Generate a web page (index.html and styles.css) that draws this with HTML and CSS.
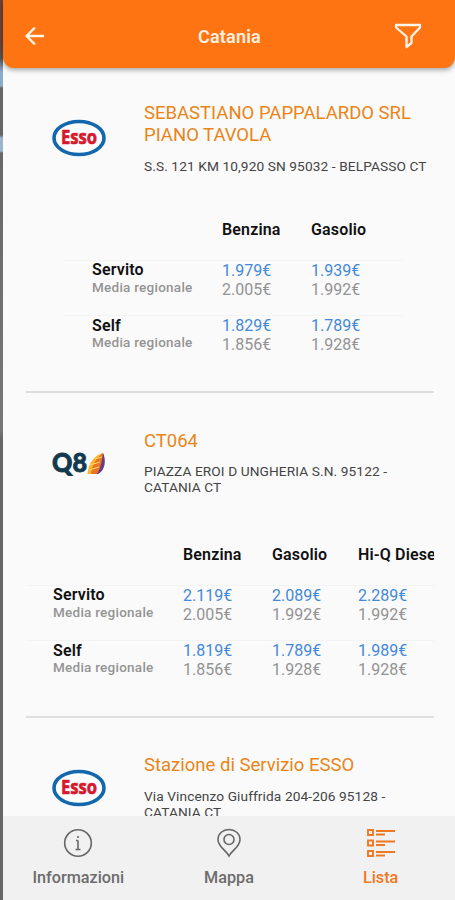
FILE: index.html
```
<!DOCTYPE html>
<html lang="it">
<head>
    <meta charset="UTF-8">
    <meta name="viewport" content="width=device-width, initial-scale=1.0">
    <title>Distributori - Catania</title>
    <link rel="stylesheet" href="styles.css">
</head>
<body>
    <div class="app">
        <header>
            <svg class="back" viewBox="0 0 20 20"><path d="M19 10H2M10 1.500L1.500 10L10 18.500"/></svg>
            <h1>Catania</h1>
            <svg class="filter" viewBox="0 0 28 26"><path d="M2 2H26V4.500L17.500 13.500V20L12.500 24V13.500L2 4.500Z"/></svg>
        </header>
        <main>
            <section class="station">
                <div class="info tall">
                    <svg class="logo" viewBox="0 0 54 38">
                        <ellipse cx="27" cy="19" rx="25" ry="16.500" fill="#fff" stroke="#1267ad" stroke-width="3.600"/>
                        <text class="esso" x="27" y="25" textLength="36" lengthAdjust="spacingAndGlyphs">Esso</text>
                    </svg>
                    <div class="text">
                        <h2>SEBASTIANO PAPPALARDO SRL PIANO TAVOLA</h2>
                        <p>S.S. 121 KM 10,920 SN 95032 - BELPASSO CT</p>
                    </div>
                </div>
                <div class="prices two">
                    <div class="row head"><span></span><b>Benzina</b><b>Gasolio</b></div>
                    <div class="row">
                        <div class="label"><b>Servito</b><small>Media regionale</small></div>
                        <div class="price">1.979€<i>2.005€</i></div>
                        <div class="price">1.939€<i>1.992€</i></div>
                    </div>
                    <div class="row">
                        <div class="label"><b>Self</b><small>Media regionale</small></div>
                        <div class="price">1.829€<i>1.856€</i></div>
                        <div class="price">1.789€<i>1.928€</i></div>
                    </div>
                </div>
            </section>
            <section class="station">
                <div class="info">
                    <svg class="logo" viewBox="0 0 54 38">
                        <text class="q8" x="0" y="27" textLength="35" lengthAdjust="spacingAndGlyphs">Q8</text>
                        <path d="M51 8C43 10 36 18 35.500 29H46C51 24 53 16 51 8Z" fill="#f6b52c"/>
                        <path d="M51 8C44 13 40 20 39 29H46C51 24 53 16 51 8Z" fill="#ea7325"/>
                        <path d="M51 8C50 16 49 22 45 29H46C54 25 54 14 51 8Z" fill="#663c83"/>
                        <path d="M38 20L48 17M37 25L47 22M43 14L50 12" stroke="#ffd65d" stroke-width="1.300"/>
                    </svg>
                    <div class="text">
                        <h2>CT064</h2>
                        <p>PIAZZA EROI D UNGHERIA S.N. 95122 - CATANIA CT</p>
                    </div>
                </div>
                <div class="prices">
                    <div class="row head"><span></span><b>Benzina</b><b>Gasolio</b><b>Hi-Q Diesel</b></div>
                    <div class="row">
                        <div class="label"><b>Servito</b><small>Media regionale</small></div>
                        <div class="price">2.119€<i>2.005€</i></div>
                        <div class="price">2.089€<i>1.992€</i></div>
                        <div class="price">2.289€<i>1.992€</i></div>
                    </div>
                    <div class="row">
                        <div class="label"><b>Self</b><small>Media regionale</small></div>
                        <div class="price">1.819€<i>1.856€</i></div>
                        <div class="price">1.789€<i>1.928€</i></div>
                        <div class="price">1.989€<i>1.928€</i></div>
                    </div>
                </div>
            </section>
            <section class="station">
                <div class="info">
                    <svg class="logo" viewBox="0 0 54 38">
                        <ellipse cx="27" cy="19" rx="25" ry="16.500" fill="#fff" stroke="#1267ad" stroke-width="3.600"/>
                        <text class="esso" x="27" y="25" textLength="36" lengthAdjust="spacingAndGlyphs">Esso</text>
                    </svg>
                    <div class="text">
                        <h2>Stazione di Servizio ESSO</h2>
                        <p>Via Vincenzo Giuffrida 204-206 95128 - CATANIA CT</p>
                    </div>
                </div>
            </section>
        </main>
        <nav>
            <a>
                <svg viewBox="0 0 30 30"><circle cx="15" cy="15" r="13.300"/><path d="M15 12.500V21.500M13 12.500H15M12.500 21.500H17.500M15 8V10"/></svg>
                Informazioni
            </a>
            <a>
                <svg viewBox="0 0 30 30"><path d="M15 28C12 22 4 19 4 11.500C4 5.500 9 1.500 15 1.500S26 5.500 26 11.500C26 19 18 22 15 28Z"/><circle cx="15" cy="11.500" r="5"/></svg>
                Mappa
            </a>
            <a class="active">
                <svg viewBox="0 0 30 30"><path d="M2 2H7V7H2ZM2 12.500H7V17.500H2ZM2 23H7V28H2Z"/><path d="M10 3H29M10 6.500H19M10 13.500H29M10 17H19M10 24H29M10 27.500H19"/></svg>
                Lista
            </a>
        </nav>
    </div>
</body>
</html>
```
FILE: styles.css
```
*{
    box-sizing: border-box;
    margin: 0;
    padding: 0;
}

body{
    height: 900px;
    padding-left: 3px;
    overflow: hidden;
    font-family: Roboto, sans-serif;
    background: linear-gradient(#6b4238 0, #6b4238 40px, #555 58px, #8babc8 72px, #8babc8 86px, #666 88px, #666 135px, #9bb5cc 138px, #9bb5cc 151px, #686868 153px, #777 430px, #666 440px);
}

.app{
    display: flex;
    flex-direction: column;
    height: 900px;
    background: #fafafa;
}

header{
    display: flex;
    flex: none;
    align-items: center;
    justify-content: space-between;
    height: 68px;
    padding: 4px 33px 0 22px;
    background: #ff7412;
    border-radius: 0 0 11px 11px;
    box-shadow: 0 2px 5px rgba(0, 0, 0, 0.35);
}

header svg{
    fill: none;
    stroke: #fff4e8;
    stroke-width: 2.3;
    stroke-linejoin: round;
}

.back{
    width: 20px;
    height: 20px;
}

.filter{
    width: 28px;
    height: 26px;
}

h1{
    margin-left: 20px;
    font-size: 18px;
    font-weight: 600;
    letter-spacing: 0.2px;
    color: #fff0e0;
}

main{
    flex: 1;
    min-height: 0;
    padding: 0 21px 0 23px;
    overflow: hidden;
}

.station{
    height: 324.5px;
    border-bottom: 2px solid #dedede;
}

.station:first-child{
    height: 325px;
}

.info{
    display: flex;
    height: 129.5px;
    padding-top: 36.5px;
}

.info.tall{
    padding-top: 34px;
}

.logo{
    flex: none;
    width: 54px;
    height: 38px;
    margin: 15px 38px 0 26px;
}

.tall .logo{
    margin-top: 17px;
}

.esso{
    font: bold 20px "Open Sans", sans-serif;
    fill: #d7192d;
    stroke: #d7192d;
    stroke-width: 0.7;
    text-anchor: middle;
}

.q8{
    font: 900 26px Lato, sans-serif;
    fill: #12394e;
    stroke: #12394e;
    stroke-width: 0.8;
}

h2{
    margin-bottom: 11.5px;
    font-size: 18.5px;
    font-weight: 400;
    line-height: 22px;
    color: #e98518;
}

p{
    font-size: 13.7px;
    line-height: 16px;
    letter-spacing: 0.1px;
    color: #444;
}

.prices{
    overflow: hidden;
}

.two{
    width: 338px;
    margin-left: 39px;
}

.row{
    display: grid;
    grid-template-columns: 130px 89px 86px 1fr;
    height: 55.6px;
    padding-left: 27px;
    border-top: 1px solid #f3f3f3;
    white-space: nowrap;
}

.head{
    align-items: center;
    height: 62px;
    padding-top: 1px;
    border: 0;
}

.row b{
    font-size: 16px;
    font-weight: 600;
    letter-spacing: 0.15px;
    color: #111;
}

.label{
    padding-top: 1.5px;
}

.label b, .label small{
    display: block;
    line-height: 16.5px;
}

.label small{
    font-size: 13.5px;
    font-weight: 500;
    letter-spacing: 0.25px;
    color: #949494;
}

.price{
    padding-top: 0.3px;
    font-size: 16px;
    line-height: 19px;
    color: #4389d8;
}

.price i{
    display: block;
    font-style: normal;
    color: #939393;
}

nav{
    display: grid;
    grid-template-columns: repeat(3, 1fr);
    flex: none;
    height: 84px;
    background: #f1f1f1;
}

nav a{
    display: flex;
    flex-direction: column;
    align-items: center;
    padding-top: 12px;
    font-size: 16.2px;
    font-weight: 500;
    line-height: 20px;
    color: #6c6c6c;
}

nav svg{
    width: 30px;
    height: 30px;
    margin-bottom: 10px;
    fill: none;
    stroke: #666;
    stroke-width: 1.6;
}

nav .active{
    padding-left: 2px;
    color: #f17822;
}

.active svg{
    stroke: #f17822;
    stroke-width: 1.9;
}
```
